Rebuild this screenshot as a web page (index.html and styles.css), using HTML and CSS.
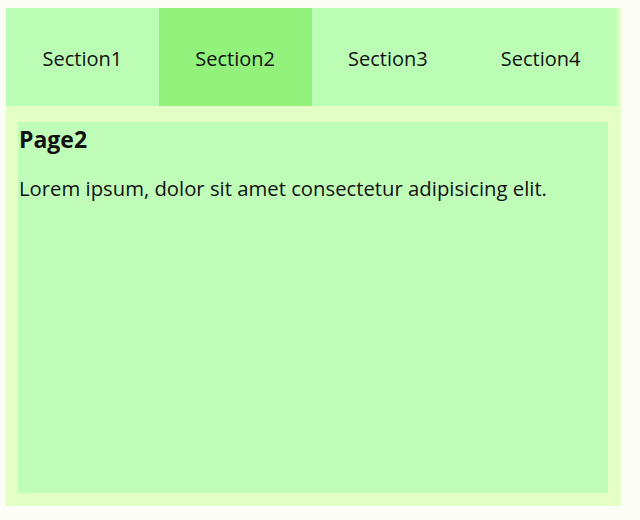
FILE: index.html
```html
<!DOCTYPE html>
<html>
<head>
<meta charset="utf-8">
<link rel="stylesheet" href="styles.css">
</head>
<body>
<div class="app">
  <div class="tabs">
    <div class="tab">Section1</div>
    <div class="tab active">Section2</div>
    <div class="tab">Section3</div>
    <div class="tab">Section4</div>
  </div>
  <div class="panel">
    <h3 class="title">Page2</h3>
    <p class="text">Lorem ipsum, dolor sit amet consectetur adipisicing elit.</p>
  </div>
</div>
</body>
</html>
```

FILE: styles.css
```css
html, body {
  margin: 0;
  padding: 0;
  background: #fdfdf8;
}
body {
  font-family: "Open Sans", "Noto Sans", sans-serif;
  color: #111;
}
.app {
  margin: 8px 0 0 6px;
  width: 615px;
  height: 498px;
  background: #e4ffc6;
  display: flex;
  flex-direction: column;
  padding-right: 4px;
  box-sizing: border-box;
}
.tabs {
  display: flex;
  height: 98px;
  background: #bcfdb6;
}
.tab {
  flex: 1;
  display: flex;
  align-items: center;
  justify-content: center;
  font-size: 20px;
  padding-top: 2px;
}
.tab.active {
  background: #92f27c;
}
.panel {
  flex: 1;
  margin: 16px 9px 13px 12px;
  background: #c0fdb8;
  padding: 0 1px;
}
.title {
  margin: 0;
  padding-top: 3px;
  font-size: 23px;
  font-weight: 700;
  line-height: 28px;
}
.text {
  margin: 21px 0 0 0;
  font-size: 20.3px;
  line-height: 28px;
}
```
